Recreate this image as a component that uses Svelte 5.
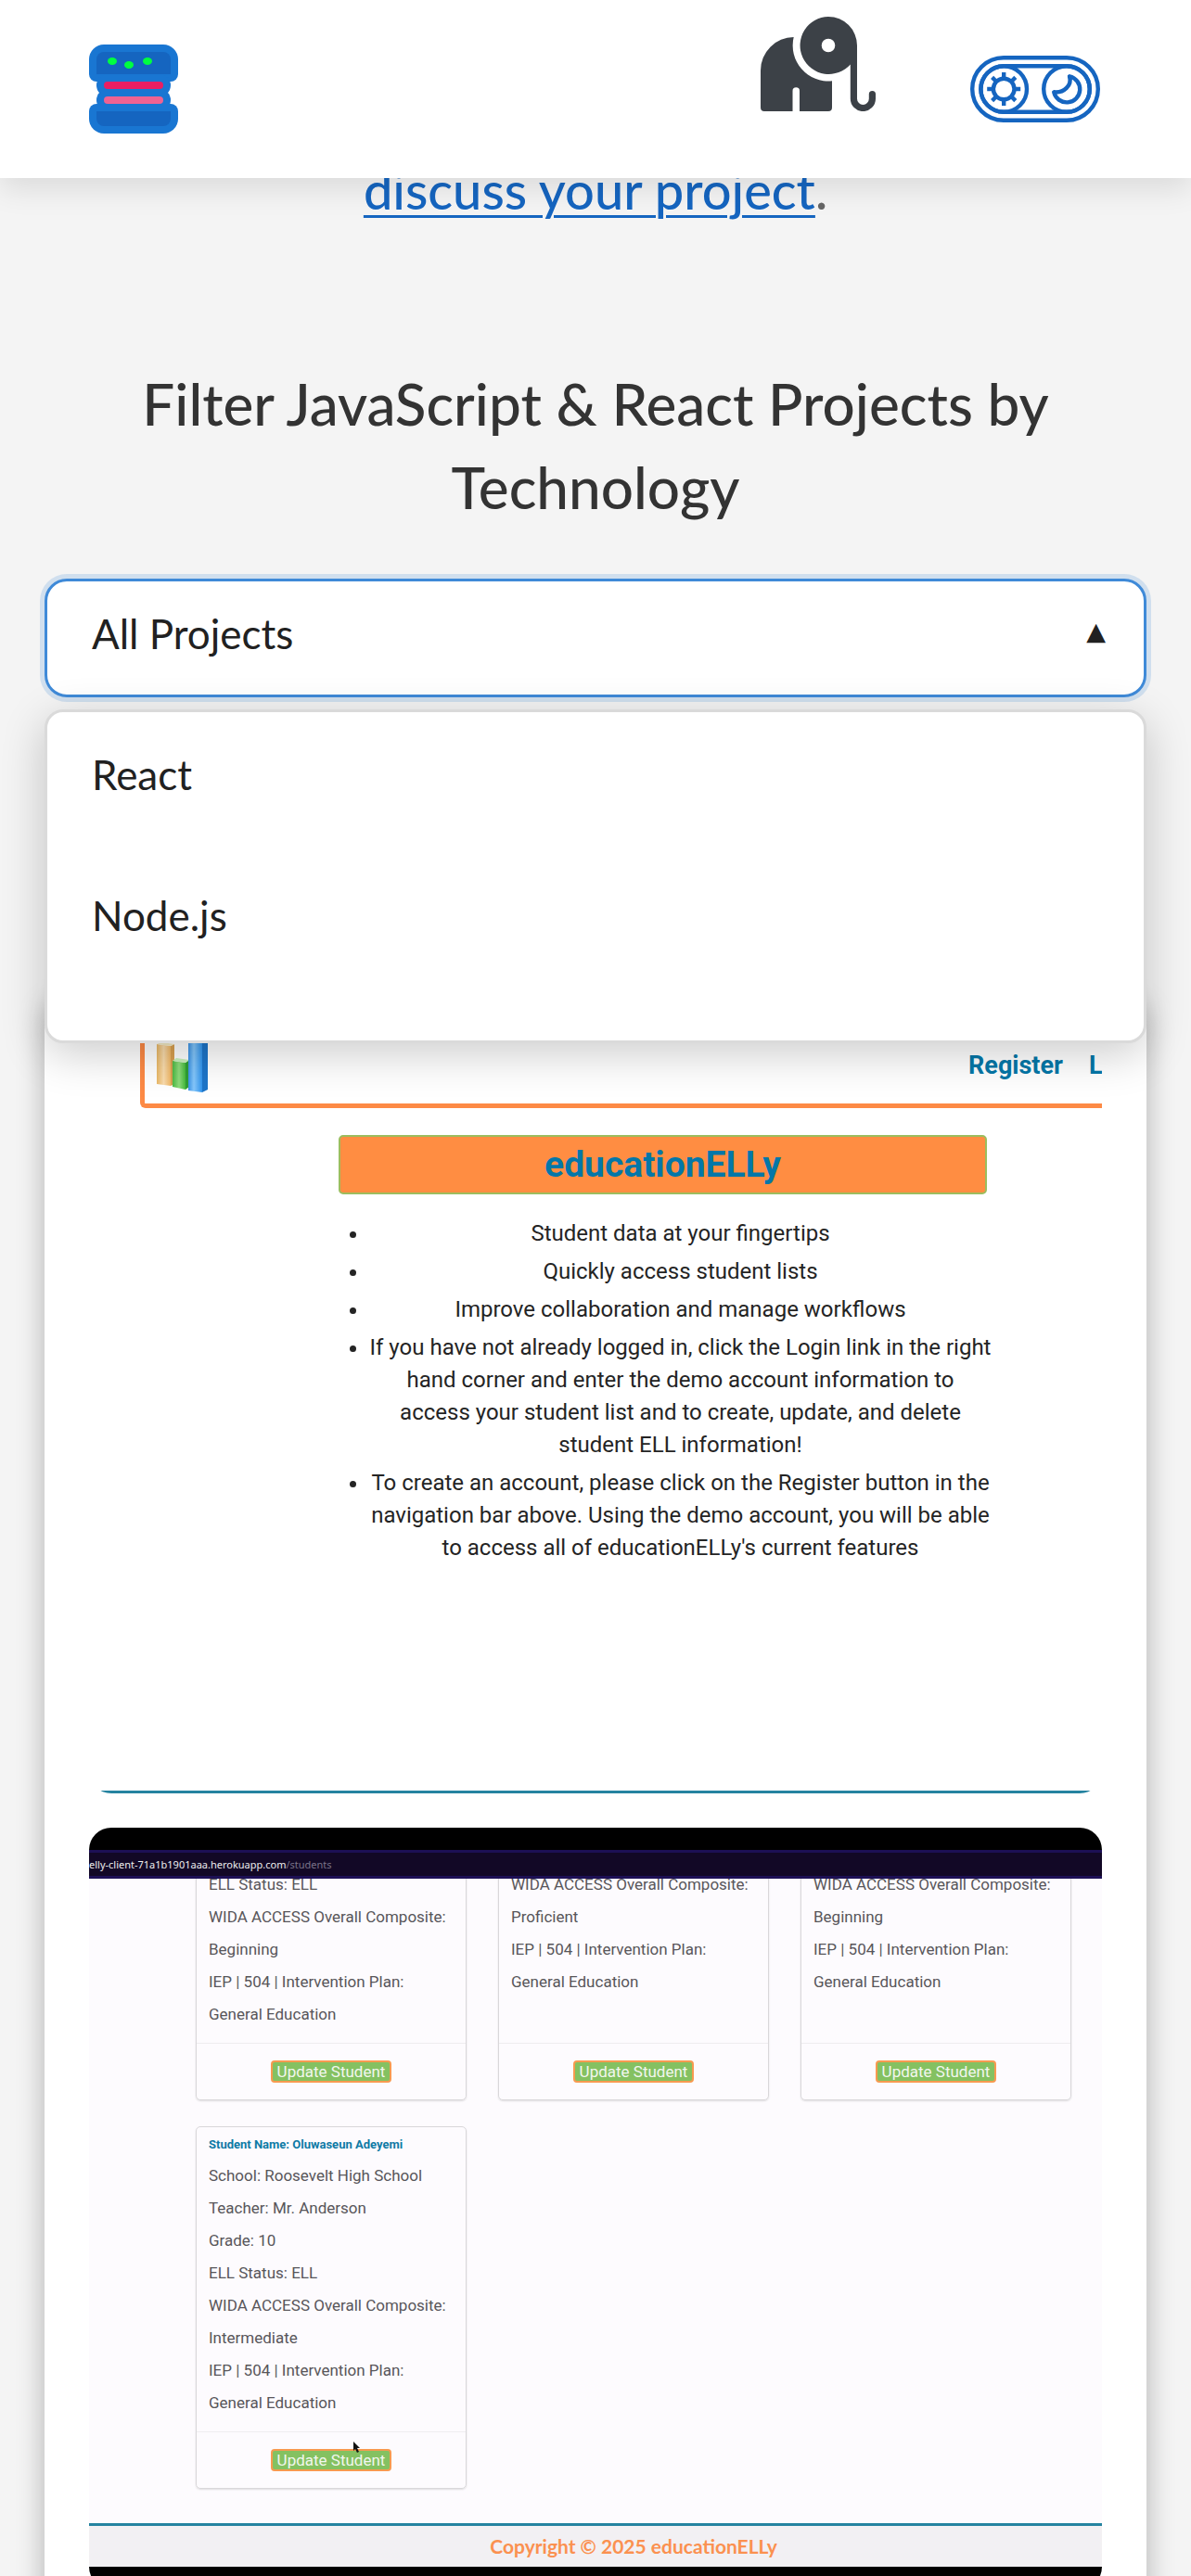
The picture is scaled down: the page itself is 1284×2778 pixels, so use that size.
<script>
  const technologies = ['React', 'Node.js', 'Angular'];
  let open = $state(true);
  let selected = $state('All Projects');

  const features = [
    'Student data at your fingertips',
    'Quickly access student lists',
    'Improve collaboration and manage workflows',
    'If you have not already logged in, click the Login link in the right hand corner and enter the demo account information to access your student list and to create, update, and delete student ELL information!',
    "To create an account, please click on the Register button in the navigation bar above. Using the demo account, you will be able to access all of educationELLy's current features"
  ];

  const plan = ['IEP | 504 | Intervention Plan:', 'General Education'];
  const wida = 'WIDA ACCESS Overall Composite:';
  const students = [
    { lines: ['ELL Status: ELL', wida, 'Beginning', ...plan] },
    { lines: [wida, 'Proficient', ...plan] },
    { lines: [wida, 'Beginning', ...plan] },
    {
      name: 'Student Name: Oluwaseun Adeyemi',
      pointer: true,
      lines: [
        'School: Roosevelt High School',
        'Teacher: Mr. Anderson',
        'Grade: 10',
        'ELL Status: ELL',
        wida,
        'Intermediate',
        ...plan
      ]
    }
  ];

  function toggle(event) {
    event.preventDefault();
    open = !open;
  }

  function choose(name) {
    selected = name;
    open = false;
  }
</script>

<header class="topbar">
  <a class="logo" href="#home" aria-label="Home">
    <svg viewBox="0 0 96 96" width="96" height="96" aria-hidden="true">
      <g fill="#1976d2">
        <path d="M16 0H80A16 16 0 0 1 96 16V32A8 8 0 0 1 88 40H8A8 8 0 0 1 0 32V16A16 16 0 0 1 16 0Z" />
        <rect x="8" y="32" width="80" height="24" rx="12" />
        <rect x="8" y="48" width="80" height="24" rx="12" />
        <path d="M8 64H88A8 8 0 0 1 96 72V80A16 16 0 0 1 80 96H16A16 16 0 0 1 0 80V72A8 8 0 0 1 8 64Z" />
      </g>
      <path d="M16 8H80A8 8 0 0 1 88 16V32H8V16A8 8 0 0 1 16 8Z" fill="#1565c0" />
      <path d="M8 72H88V80A8 8 0 0 1 80 88H16A8 8 0 0 1 8 80Z" fill="#1565c0" />
      <rect x="16" y="40" width="64" height="8" rx="4" fill="#e91e63" />
      <rect x="16" y="56" width="64" height="8" rx="4" fill="#f06292" />
      <g fill="#00ff40">
        <ellipse cx="25" cy="18" rx="5" ry="4" />
        <ellipse cx="43" cy="22" rx="5" ry="4" />
        <ellipse cx="63" cy="18" rx="5" ry="4" />
      </g>
    </svg>
  </a>
  <div class="tools">
    <a class="elephant" href="#about" aria-label="Elephant">
      <svg viewBox="0 0 124 103" width="124" height="103" fill="#3c4147" aria-hidden="true">
        <path d="M35.7 23A36 36 0 0 0 0 59V99A4 4 0 0 0 4 103H34.5V81A3.75 3.75 0 0 1 42 81V103H73A4 4 0 0 0 77 99V70.3A38.5 38.5 0 0 1 35.7 23Z" />
        <path fill-rule="evenodd" d="M73 1A31 31 0 0 1 104 32V89.5A6.4 6.4 0 0 0 116.8 89.5V84.5A3.6 3.6 0 0 1 124 84.5V89.5A13.6 13.6 0 0 1 96.8 89.5V52.5A31 31 0 1 1 73 1ZM73 24.7A7.3 7.3 0 1 0 73 39.3A7.3 7.3 0 1 0 73 24.7Z" />
      </svg>
    </a>
    <button class="theme" type="button" aria-label="Switch colour theme">
      <svg viewBox="0 0 140 72" width="140" height="72" fill="none" stroke="#1565c0" stroke-width="4.4" aria-hidden="true">
        <rect x="2.2" y="2.2" width="135.6" height="67.6" rx="33.8" />
        <rect x="11.4" y="11.2" width="117.4" height="49.6" rx="24.8" />
        <circle cx="36.2" cy="36" r="24.8" />
        <circle cx="104" cy="36" r="24.8" />
        <circle cx="36.2" cy="36" r="11.3" />
        <path d="M36.2 18V25M36.2 47V54M18.2 36H25.2M47.2 36H54.2M23.6 23.4L28.4 28.2M44 43.8L48.8 48.6M48.8 23.4L44 28.2M28.4 43.8L23.6 48.6" />
        <path d="M107 22.3A14.2 14.2 0 1 1 90.2 39.3C101 40.5 110 32 107 22.3Z" stroke-linejoin="round" />
      </svg>
    </button>
  </div>
</header>

<main>
  <p class="lead"><a href="#contact">discuss your project</a>.</p>

  <section class="filter">
    <h2><label for="technology">Filter JavaScript &amp; React Projects by Technology</label></h2>
    <div class="picker">
      <select id="technology" value={selected} onmousedown={toggle}>
        <option>All Projects</option>
        {#each technologies as name}
          <option>{name}</option>
        {/each}
      </select>
      <span class="arrow" aria-hidden="true">{open ? '▲' : '▼'}</span>
      {#if open}
        <div class="menu">
          {#each technologies as name}
            <button type="button" onclick={() => choose(name)}>{name}</button>
          {/each}
        </div>
      {/if}
    </div>
  </section>

  <article class="project">
    <div class="shot landing">
      <div class="navbar">
        <svg viewBox="0 0 58 63" width="58" height="63" aria-hidden="true">
          <defs>
            <linearGradient id="amber"><stop offset="0" stop-color="#e9b765" /><stop offset=".5" stop-color="#f9dcae" /><stop offset="1" stop-color="#efb766" /></linearGradient>
            <linearGradient id="green"><stop offset="0" stop-color="#4cb944" /><stop offset=".5" stop-color="#8fdc7c" /><stop offset="1" stop-color="#44b93c" /></linearGradient>
            <linearGradient id="blue"><stop offset="0" stop-color="#3b93e6" /><stop offset=".4" stop-color="#86c8fb" /><stop offset="1" stop-color="#2f93ec" /></linearGradient>
          </defs>
          <path d="M1 10L16 12V55L1 53Z" fill="url(#amber)" />
          <path d="M16 12L20 10V53L16 55Z" fill="#d9a050" />
          <path d="M1 10L6 8L20 10L16 12Z" fill="#f3ebc4" />
          <path d="M18 28L32 30V59L18 56Z" fill="url(#green)" />
          <path d="M32 30L36 27V56L32 59Z" fill="#2f9e35" />
          <path d="M18 28L22 25L36 27L32 30Z" fill="#c9f0bd" />
          <path d="M35 0H50V62L35 60Z" fill="url(#blue)" />
          <path d="M50 0H56V59L50 62Z" fill="#1d75c9" />
        </svg>
        <nav>
          <a href="#register">Register</a>
          <a href="#login">Login</a>
        </nav>
      </div>
      <div class="intro">
        <h3>educationELLy</h3>
        <ul>
          {#each features as feature}
            <li>{feature}</li>
          {/each}
        </ul>
      </div>
    </div>

    <div class="shot students">
      <div class="address">elly-client-71a1b1901aaa.herokuapp.com<span>/students</span></div>
      <div class="viewport">
        <div class="grid">
          {#each students as student}
            <div class="card">
              <div class="details">
                {#if student.name}<h4>{student.name}</h4>{/if}
                {#each student.lines as line}
                  <p>{line}</p>
                {/each}
              </div>
              <div class="actions">
                <button type="button">Update Student</button>
                {#if student.pointer}
                  <svg class="pointer" viewBox="0 0 8 12" width="8" height="12" aria-hidden="true">
                    <path d="M1 0V10L3 8L5 12L7 11L5 7H8Z" fill="#111" />
                  </svg>
                {/if}
              </div>
            </div>
          {/each}
        </div>
      </div>
      <footer>Copyright © 2025 educationELLy</footer>
    </div>
  </article>
</main>

<style>
  :global(body) {
    margin: 0;
    background: #f4f4f4;
    color: #212121;
    font-family: 'Avenir Next', Avenir, Lato, sans-serif;
  }

  :global(#app) {
    height: 100vh;
    overflow: hidden;
  }

  .topbar {
    position: fixed;
    inset: 0 0 auto;
    z-index: 10;
    box-sizing: border-box;
    height: 192px;
    padding: 0 98px 0 96px;
    display: flex;
    align-items: center;
    justify-content: space-between;
    background: #fff;
    box-shadow: 0 12px 30px rgba(0, 0, 0, 0.1);
  }

  .topbar svg {
    display: block;
  }

  .tools {
    display: flex;
    align-items: center;
    gap: 102px;
  }

  .elephant {
    padding-bottom: 55px;
  }

  .theme {
    padding: 0;
    border: 0;
    background: none;
  }

  main {
    padding: 160px 48px 0;
  }

  .lead {
    margin: 0 0 140px;
    color: #666;
    font-size: 56px;
    font-weight: 500;
    line-height: 90px;
    text-align: center;
  }

  .lead a {
    color: #1565c0;
    text-decoration-thickness: 3px;
    text-underline-offset: 6px;
  }

  h2 {
    margin: 0 0 54px;
    color: #333;
    font-size: 62px;
    font-weight: 500;
    line-height: 90px;
    text-align: center;
  }

  .picker {
    position: relative;
  }

  select {
    display: block;
    box-sizing: border-box;
    width: 100%;
    padding: 29px 96px 39px 48px;
    border: 3px solid #3f8ad8;
    border-radius: 24px;
    outline: 0;
    appearance: none;
    background: #fff;
    box-shadow: 0 0 0 5px rgba(63, 138, 216, 0.2);
    color: #212121;
    font: inherit;
    font-size: 44px;
    line-height: 54px;
  }

  .arrow {
    position: absolute;
    top: 42px;
    right: 44px;
    font: 27px/30px 'DejaVu Sans', sans-serif;
    pointer-events: none;
  }

  .menu {
    position: absolute;
    top: calc(100% + 13px);
    left: 0;
    right: 0;
    z-index: 5;
    box-sizing: border-box;
    height: 360px;
    overflow: hidden;
    border: 3px solid #dadada;
    border-radius: 20px;
    background: #fff;
    box-shadow: 0 12px 48px rgba(0, 0, 0, 0.2);
  }

  .menu button {
    display: block;
    width: 100%;
    padding: 40px 48px 58px;
    border: 0;
    background: none;
    color: inherit;
    font: inherit;
    font-size: 44px;
    line-height: 54px;
    text-align: left;
  }

  .project {
    display: flex;
    flex-direction: column;
    gap: 37px;
    margin-top: 316px;
    padding: 48px;
    border-radius: 24px;
    background: #fff;
    box-shadow: 0 12px 30px rgba(0, 0, 0, 0.28);
  }

  .shot {
    overflow: hidden;
    border-radius: 24px;
    font-family: Roboto, sans-serif;
  }

  .landing {
    background: linear-gradient(#2583a0, #2583a0) bottom / 100% 3px no-repeat #fff;
    padding-bottom: 247px;
  }

  .navbar {
    display: flex;
    justify-content: space-between;
    margin-left: 55px;
    padding: 0 0 11px 12px;
    border: solid #fd8a45;
    border-width: 0 0 5px 5px;
    border-bottom-left-radius: 6px;
  }

  nav {
    display: flex;
    gap: 28px;
    width: 144px;
    padding-top: 18px;
    white-space: nowrap;
  }

  nav a {
    color: #0477a8;
    font-size: 27px;
    font-weight: 700;
    line-height: 30px;
    text-decoration: none;
  }

  .intro {
    margin: 29px 124px 0 269px;
    text-align: center;
  }

  h3 {
    margin: 0 0 25px;
    border: 2px solid #9cbd5e;
    border-radius: 5px;
    background: #ff8d42;
    color: #0477a8;
    font-size: 39px;
    font-weight: 700;
    line-height: 60px;
  }

  ul {
    display: flex;
    flex-direction: column;
    gap: 6px;
    margin: 0 -5px 0 0;
    padding-left: 33px;
    color: #242424;
    font-size: 24px;
    line-height: 35px;
  }

  .students {
    border-block: 24px solid #000;
    background: #fdfbfe;
  }

  .address {
    border: solid #1d1055;
    border-width: 3px 0;
    background: #120826;
    color: #eee;
    font: 11px/25px 'Noto Sans', sans-serif;
    white-space: nowrap;
  }

  .address span {
    color: #7a7388;
  }

  .viewport {
    overflow: hidden;
    padding: 0 33px 37px 115px;
  }

  .grid {
    display: grid;
    grid-template-columns: repeat(3, minmax(0, 1fr));
    gap: 28px 34px;
    margin-top: -12px;
  }

  .card {
    display: flex;
    flex-direction: column;
    justify-content: space-between;
    border: 1px solid #d9d7da;
    border-radius: 5px;
    box-shadow: 0 1px 2px rgba(0, 0, 0, 0.12);
  }

  .details {
    padding: 0 13px 13px;
    color: #58565a;
    white-space: nowrap;
  }

  h4 {
    margin: 9px 0 6px;
    color: #0e7aa5;
    font-size: 13px;
    font-weight: 700;
    line-height: 20px;
  }

  p {
    margin: 0;
  }

  .details p {
    font-size: 17px;
    line-height: 35px;
  }

  .actions {
    position: relative;
    padding: 18px 0;
    border-top: 1px solid #efedf0;
    text-align: center;
  }

  .actions button {
    display: block;
    margin: 0 auto;
    padding: 0 5px;
    border: 2px solid #f79a50;
    border-radius: 4px;
    background: #84c161;
    color: #f1f6ee;
    font: 17px/20px Roboto, sans-serif;
  }

  .pointer {
    position: absolute;
    top: 10px;
    left: 168px;
  }

  footer {
    padding-left: 82px;
    border-top: 3px solid #2583a0;
    background: #f2f0f3;
    color: #fb9150;
    font: 700 21px/44px Lato, sans-serif;
    text-align: center;
  }
</style>
